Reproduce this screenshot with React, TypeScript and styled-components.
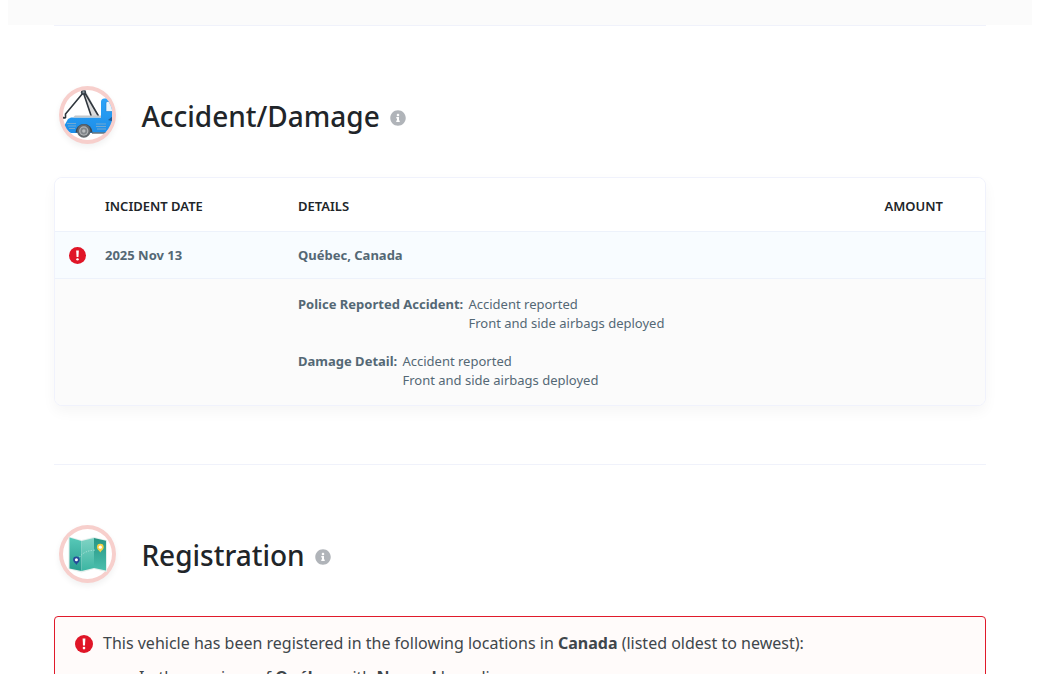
import React from "react";
import styled, { createGlobalStyle } from "styled-components";
import { FaInfoCircle } from "react-icons/fa";

const GlobalStyle = createGlobalStyle`
  *, *::before, *::after { box-sizing: border-box; }
  html { overflow: hidden; }
  body {
    margin: 0 8px;
    height: 674px;
    overflow: hidden;
    background: #fff;
    color: #212529;
    font-family: "Noto Sans", sans-serif;
    font-size: 16px;
  }
`;

const PreviousBand = styled.div`
  height: 25px;
  background: #fbfbfb;
`;

const Section = styled.section<{ $last?: boolean }>`
  height: ${(p) => (p.$last ? "auto" : "439px")};
  margin: 0 46px;
  padding-top: 60px;
  border-top: 1px solid #f0f2fb;
`;

const SectionHeader = styled.header`
  display: flex;
  align-items: center;
  height: 58px;
  padding-left: 5px;
`;

const Badge = styled.div`
  width: 57px;
  height: 58px;
  border: 4px solid #f7cfcc;
  border-radius: 50%;
  background: #fff;
  box-shadow: 0 3px 6px rgba(0, 0, 0, 0.06);
  svg { display: block; }
`;

const Title = styled.h2`
  margin: 2px 10px 0 25.4px;
  font-size: 28px;
  font-weight: 500;
  line-height: 40px;
`;

const Info = styled(FaInfoCircle)`
  width: 16px;
  height: 16px;
  margin-top: 6px;
  color: #b0b4b9;
`;

const Card = styled.div`
  margin-top: 33px;
  overflow: hidden;
  border: 1px solid #f0f2fc;
  border-radius: 8px;
  background: #fff;
  box-shadow: 0 6px 14px rgba(0, 0, 0, 0.04);
  font-size: 13px;
`;

const Row = styled.div<{ $kind: "head" | "record" | "detail" }>`
  display: grid;
  grid-template-columns: 50px 193px 1fr auto;
  align-items: ${(p) => (p.$kind === "detail" ? "start" : "center")};
  height: ${(p) => ({ head: 54, record: 47, detail: 126 })[p.$kind]}px;
  padding-right: 42px;
  border-bottom: ${(p) => (p.$kind === "detail" ? "0" : "1px solid #edf2fb")};
  background: ${(p) => ({ head: "#fff", record: "#f8fcff", detail: "#fbfbfb" })[p.$kind]};
  color: ${(p) => (p.$kind === "head" ? "#212529" : "#546875")};
  font-weight: ${(p) => ({ head: 600, record: 700, detail: 400 })[p.$kind]};
`;

const HeadCell = styled.span`
  padding-top: 2px;
`;

const AlertCell = styled.span`
  display: flex;
  padding-left: 14px;
`;

const DetailList = styled.div`
  display: grid;
  grid-column: 3;
  gap: 19px;
  padding-top: 16px;
  line-height: 19px;
`;

const Detail = styled.div`
  display: flex;
  gap: 5.2px;
`;

const Notice = styled.div`
  height: 120px;
  margin-top: 33px;
  padding: 14px 20px;
  border: 1px solid #e01a2b;
  border-radius: 4px;
  background: #fffbfa;
  color: #40464b;
  font-size: 16px;
  line-height: 24px;
`;

const NoticeLine = styled.div`
  display: flex;
  align-items: center;
  gap: 10px;
  svg { margin-top: 1.5px; }
`;

const NoticeItem = styled.p`
  margin: 10px 0 0 64px;
`;

const Alert = ({ size }: { size: number }) => (
  <svg width={size} height={size} viewBox="0 0 18 18" aria-label="Alert">
    <circle cx="9" cy="9" r="9" fill="#e01527" />
    <path d="M7.6 3.6h2.8l-.4 7H8z" fill="#fff" />
    <circle cx="9" cy="13.1" r="1.3" fill="#fff" />
  </svg>
);

const TowTruck = () => (
  <svg width="49" height="50" viewBox="0 0 49 50" aria-hidden="true">
    <defs>
      <clipPath id="towClip"><circle cx="24.5" cy="25" r="25" /></clipPath>
      <linearGradient id="towBody" x2="0" y2="1">
        <stop stopColor="#2ba3f8" /><stop offset="1" stopColor="#1e8ee8" />
      </linearGradient>
    </defs>
    <g clipPath="url(#towClip)">
      <path d="M21 3h3l12 23h-8z" fill="#dcdcdc" />
      <path d="M20 3L2.5 24v3.5q-1.5 1-3-.5M20.5 3l7.7 23M22 3l13.5 23" fill="none" stroke="#30373e" strokeWidth="1.6" />
      <path d="M5 29l3-1.5h30V12q0-3.5 3.5-3.5H51V43H8L0 38z" fill="url(#towBody)" />
      <path d="M12 25.5h26v2H10z" fill="#c4c8cb" />
      <path d="M44 11.5h7v10h-8V13q0-1.5 1-1.5z" fill="#e8f4fc" stroke="#1b7fd0" strokeWidth=".6" />
      <path d="M4 33.5h9M5 36h8M6 38.5h6M33 34h10M33 36.5h10M34 39h9" stroke="#7babcf" strokeWidth=".9" />
      <path d="M29 43h19" stroke="#68747d" strokeWidth="1.5" />
      <path d="M12.5 42.5a8.5 8.5 0 0117 0z" fill="#3a4752" />
      <path d="M45 30l5-4v5.5z" fill="#1f5c97" />
      <circle cx="20.8" cy="41" r="6.7" fill="#656a6e" />
      <circle cx="20.8" cy="41" r="4.7" fill="#b0b3b5" />
      <circle cx="20.8" cy="41" r="3.4" fill="#81868a" />
      <circle cx="20.8" cy="41" r="1.7" fill="#b9bcbe" />
      <circle cx="20.5" cy="2.2" r="2.6" fill="#38424b" />
      <circle cx="20.5" cy="2.2" r="1.1" fill="#848f98" />
    </g>
  </svg>
);

const RouteMap = () => (
  <svg width="49" height="50" viewBox="0 -0.6 49 50" aria-hidden="true">
    <defs>
      <linearGradient id="fold1" x2="0" y2="1"><stop stopColor="#58c9b8" /><stop offset="1" stopColor="#279c8f" /></linearGradient>
      <linearGradient id="fold2" x2="0" y2="1"><stop stopColor="#80d3c4" /><stop offset="1" stopColor="#3bb5a2" /></linearGradient>
      <linearGradient id="fold3" x2="0" y2="1"><stop stopColor="#279584" /><stop offset="1" stopColor="#4bbfad" /></linearGradient>
    </defs>
    <path d="M5.5 7l13 3.5 12.5-3 13 3.2v31.8L31 39.5l-12.5 3.3-13-3.3z" fill="#e3efec" />
    <path d="M6.5 8l12 3.5V41.5l-12-2.7z" fill="url(#fold1)" />
    <path d="M18.5 11.5L31 8.5v30L18.5 41.5z" fill="url(#fold2)" />
    <path d="M31 8.5l12 2.7V41L31 38.5z" fill="url(#fold3)" />
    <path d="M16.5 27.5q5-7 17-7" fill="none" stroke="#b4e7de" strokeDasharray="1.2 1.5" />
    <path d="M13.4 35.3c-1-2-3.3-3-3.3-5.2a3.3 3.3 0 016.6 0c0 2.2-2.3 3.2-3.3 5.2z" fill="#264a9a" />
    <circle cx="13.4" cy="30.2" r="1.5" fill="#fff" />
    <path d="M37.3 22.8c-1-2-3.4-3-3.4-5.2a3.4 3.4 0 016.8 0c0 2.2-2.4 3.2-3.4 5.2z" fill="#f8d043" />
    <circle cx="37.3" cy="17.6" r="1.6" fill="#fff" />
  </svg>
);

export default function App() {
  return (
    <>
      <GlobalStyle />
      <PreviousBand />
      <Section>
        <SectionHeader>
          <Badge><TowTruck /></Badge>
          <Title>Accident/Damage</Title>
          <Info />
        </SectionHeader>
        <Card>
          <Row $kind="head">
            <span />
            <HeadCell>INCIDENT DATE</HeadCell>
            <HeadCell>DETAILS</HeadCell>
            <HeadCell>AMOUNT</HeadCell>
          </Row>
          <Row $kind="record">
            <AlertCell><Alert size={17} /></AlertCell>
            <span>2025 Nov 13</span>
            <span>Québec, Canada</span>
          </Row>
          <Row $kind="detail">
            <DetailList>
              {["Police Reported Accident:", "Damage Detail:"].map((label) => (
                <Detail key={label}>
                  <strong>{label}</strong>
                  <div>
                    <div>Accident reported</div>
                    <div>Front and side airbags deployed</div>
                  </div>
                </Detail>
              ))}
            </DetailList>
          </Row>
        </Card>
      </Section>
      <Section $last>
        <SectionHeader>
          <Badge><RouteMap /></Badge>
          <Title>Registration</Title>
          <Info />
        </SectionHeader>
        <Notice>
          <NoticeLine>
            <Alert size={18} />
            <span>This vehicle has been registered in the following locations in <strong>Canada</strong> (listed oldest to newest):</span>
          </NoticeLine>
          <NoticeItem>In the province of <strong>Québec</strong> with <strong>Normal</strong> branding</NoticeItem>
        </Notice>
      </Section>
    </>
  );
}
